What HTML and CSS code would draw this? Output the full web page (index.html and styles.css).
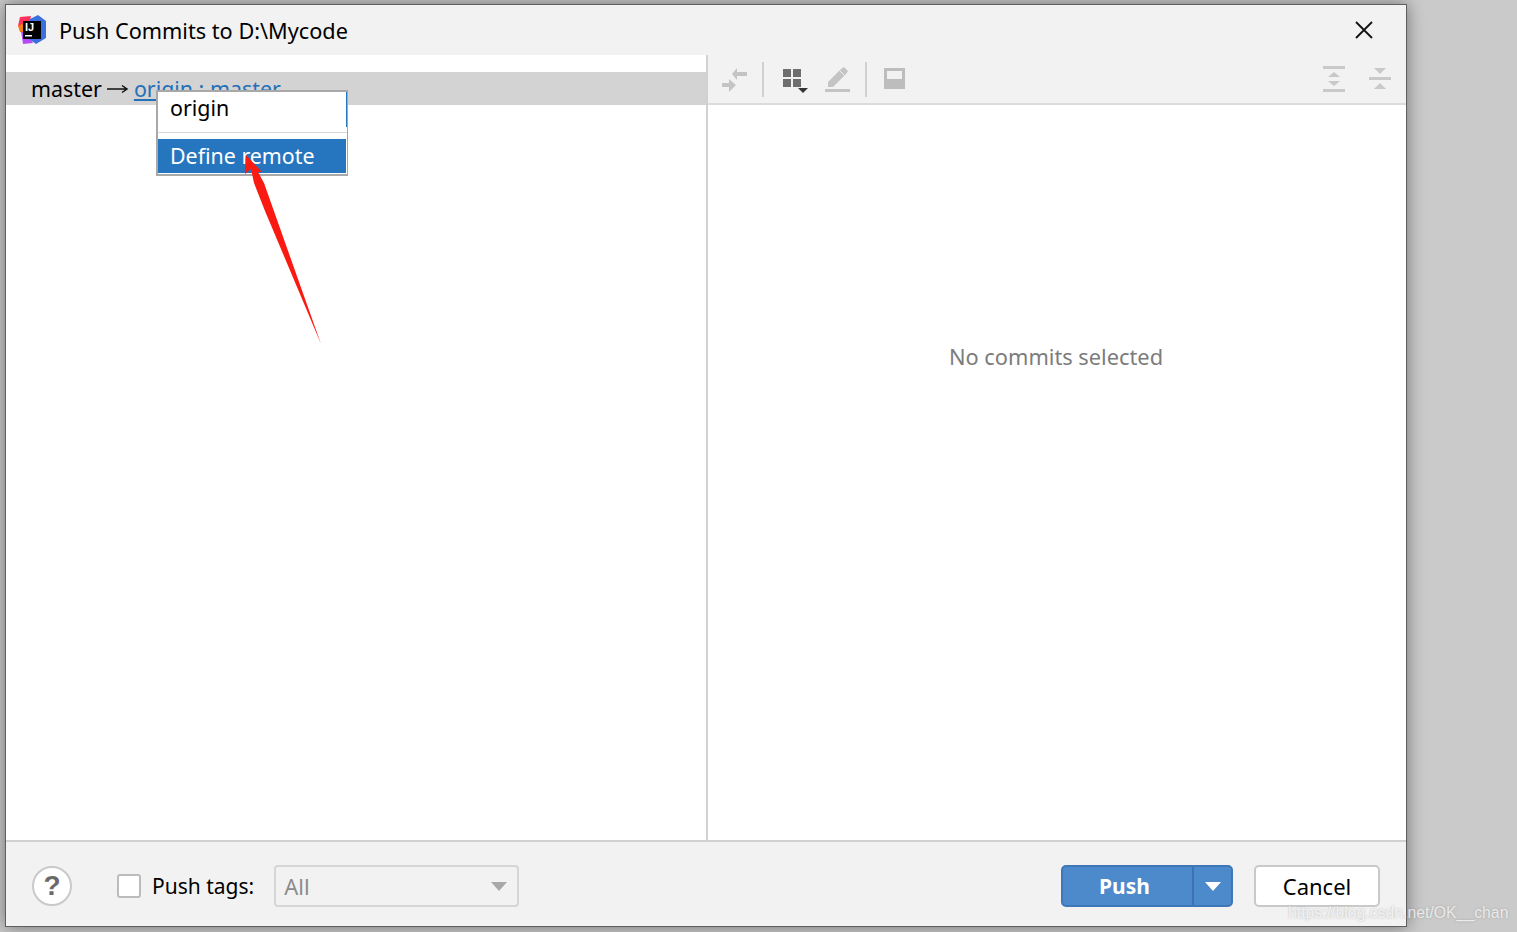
FILE: index.html
```html
<!DOCTYPE html>
<html lang="en">
<head>
    <meta charset="UTF-8">
    <title>Push Commits</title>
    <link rel="stylesheet" href="styles.css">
</head>
<body>

<div class="dialog">
    <div class="title-bar">
        <svg class="app-logo" width="30" height="30" viewBox="0 0 30 30">
            <polygon points="3,2 14,1 12,10 5,14 1,11" fill="#fe315d"/>
            <polygon points="1,11 7,8 7,18 3,17" fill="#f97a12"/>
            <polygon points="4,16 11,20 16,28 6,29" fill="#b74af7"/>
            <polygon points="13,4 21,0 29,6 29,23 19,29 12,24" fill="#3a6fe0"/>
            <rect x="6" y="6" width="18" height="18" fill="#000"/>
            <text class="logo-text" x="8" y="15.5">IJ</text>
            <rect x="8" y="20" width="7" height="1.5" fill="#fff"/>
        </svg>
        <span class="title-text">Push Commits to D:\Mycode</span>
        <svg class="close-icon" width="18" height="18" viewBox="0 0 18 18">
            <path d="M1 1 L17 17 M17 1 L1 17" stroke="#111" stroke-width="1.8" fill="none"/>
        </svg>
    </div>

    <div class="main">
        <div class="left-pane">
            <div class="branch-row">
                <span>master</span>
                <span class="arrow-glyph">
                    <svg width="22" height="10" viewBox="0 0 22 10"><path d="M0 5 H20 M15 1.5 L20 5 L15 8.5" stroke="#111" stroke-width="1.5" fill="none"/></svg>
                </span>
                <a class="remote-link">origin : master</a>
            </div>
        </div>
        <div class="right-pane">
            <div class="toolbar">
                <svg class="tb-icon" width="28" height="28" viewBox="0 0 28 28">
                    <path d="M11 9 L16 3 V7 H26 V11 H16 V15 Z" fill="#c4c4c4"/>
                    <path d="M1 18 H8 V14 L15 20 L8 27 V22 H1 Z" fill="#c4c4c4"/>
                </svg>
                <div class="tb-sep"></div>
                <svg class="tb-icon group-icon" width="28" height="28" viewBox="0 0 28 28">
                    <rect x="1" y="1" width="8" height="8" fill="#6e6e6e"/>
                    <rect x="11" y="1" width="8" height="8" fill="#6e6e6e"/>
                    <rect x="1" y="11" width="8" height="8" fill="#6e6e6e"/>
                    <rect x="11" y="11" width="8" height="8" fill="#6e6e6e"/>
                    <polygon points="16,20 26,20 21,25" fill="#333"/>
                </svg>
                <svg class="tb-icon pencil-icon" width="28" height="28" viewBox="0 0 28 28">
                    <path d="M4 17 L17 4 L20 2 L24 6 L22 9 L9 22 L4 22 Z" fill="#c4c4c4"/>
                    <path d="M15.5 5.5 L20.5 10.5" stroke="#f2f2f2" stroke-width="1"/>
                    <rect x="1" y="24" width="25" height="3" fill="#c4c4c4"/>
                </svg>
                <div class="tb-sep sep-b"></div>
                <svg class="tb-icon" width="24" height="24" viewBox="0 0 24 24">
                    <rect x="1" y="1" width="21" height="21" fill="#bdbdbd"/>
                    <rect x="4" y="4" width="15" height="8" fill="#f2f2f2"/>
                </svg>
                <div class="tb-spacer"></div>
                <svg class="tb-icon expand-icon" width="24" height="26" viewBox="0 0 24 26">
                    <rect x="1" y="0" width="22" height="3" fill="#c9c9c9"/>
                    <polygon points="12,6 18,11 6,11" fill="#c9c9c9"/>
                    <polygon points="6,15 18,15 12,20" fill="#c9c9c9"/>
                    <rect x="1" y="23" width="22" height="3" fill="#c9c9c9"/>
                </svg>
                <svg class="tb-icon collapse-icon" width="24" height="24" viewBox="0 0 24 24">
                    <polygon points="6,1 18,1 12,7" fill="#c9c9c9"/>
                    <rect x="1" y="10" width="22" height="3" fill="#c9c9c9"/>
                    <polygon points="12,16 18,22 6,22" fill="#c9c9c9"/>
                </svg>
            </div>
            <div class="details">No commits selected</div>
        </div>
    </div>

    <div class="footer">
        <div class="help-btn">?</div>
        <label class="push-tags">
            <span class="check-box"></span>
            <span>Push tags:</span>
        </label>
        <div class="tag-select">
            <span>All</span>
            <span class="caret caret-grey"></span>
        </div>
        <div class="footer-spacer"></div>
        <div class="push-btn">
            <span class="push-label">Push</span>
            <span class="push-drop"><span class="caret caret-white"></span></span>
        </div>
        <div class="cancel-btn">Cancel</div>
    </div>

    <!-- Popup ueber der Branch-Zeile -->
    <div class="popup">
        <div class="popup-item first">origin</div>
        <div class="popup-line"></div>
        <div class="popup-item selected">Define remote</div>
    </div>
</div>

<!-- roter Pfeil aus dem Screenshot -->
<svg class="red-arrow" width="90" height="200" viewBox="0 0 90 200">
    <polygon points="1,0 17,17 13,17 19,28 76,189 20,56 9,28 6,14 0,19" fill="#fb1a12"/>
</svg>

<div class="watermark">https://blog.csdn.net/OK__chan</div>

</body>
</html>
```

FILE: styles.css
```css
body {
    margin: 0;
    height: 932px;
    overflow: hidden;
    background-color: #cacaca;
    font-family: "Noto Sans", "Open Sans", sans-serif;
    color: #000;
}
.dialog {
    position: relative;
    box-sizing: border-box;
    width: 1402px;
    height: 923px;
    margin: 4px 0 0 5px;
    border: 1px solid #5f5f5f;
    background-color: #f2f2f2;
    display: flex;
    flex-direction: column;
    box-shadow: 0 0 16px rgba(0, 0, 0, 0.45);
}
.title-bar {
    height: 50px;
    flex: none;
    display: flex;
    align-items: center;
    padding: 0 33px 0 11px;
}
.app-logo {
    margin: 0 12px 0 0;
}
.logo-text {
    font-family: "Liberation Sans", sans-serif;
    font-size: 11px;
    font-weight: bold;
    fill: #fff;
}
.title-text {
    font-size: 21.7px;
    flex: 1;
}
.main {
    flex: 1;
    display: flex;
    min-height: 0;
    background-color: #fff;
    border-bottom: 2px solid #d1d1d1;
}
.left-pane {
    width: 700px;
    flex: none;
    padding-top: 17px;
    border-right: 2px solid #d1d1d1;
}
.branch-row {
    box-sizing: border-box;
    height: 33px;
    background-color: #d3d3d3;
    display: flex;
    align-items: center;
    padding: 0 0 0 25px;
    font-size: 21.4px;
}
.arrow-glyph {
    display: flex;
    margin: 0 5px;
}
.remote-link {
    color: #2470b8;
    text-decoration: underline;
}
.right-pane {
    flex: 1;
    display: flex;
    flex-direction: column;
}
.toolbar {
    height: 50px;
    flex: none;
    box-sizing: border-box;
    background-color: #f2f2f2;
    border-bottom: 2px solid #dcdcdc;
    display: flex;
    align-items: center;
    padding: 0 14px 0 13px;
}
.tb-icon {
    flex: none;
}
.tb-sep {
    width: 2px;
    height: 35px;
    background-color: #d0d0d0;
    margin: 0 18px 0 13px;
}
.pencil-icon {
    margin-left: 14px;
}
.sep-b {
    margin: 0 16px 0 13px;
}
.group-icon {
    margin-top: 6px;
}
.tb-spacer {
    flex: 1;
}
.collapse-icon {
    margin-left: 22px;
}
.details {
    flex: 1;
    display: flex;
    justify-content: center;
    padding: 237px 2px 0 0;
    font-size: 21.8px;
    color: #7c7c7c;
}
.footer {
    box-sizing: border-box;
    height: 84px;
    flex: none;
    display: flex;
    align-items: center;
    padding: 4px 26px 0;
    font-size: 21px;
}
.help-btn {
    box-sizing: border-box;
    width: 40px;
    height: 40px;
    border: 2px solid #c9c9c9;
    border-radius: 50%;
    background-color: #fff;
    color: #6a6a6a;
    font-family: "Liberation Sans", sans-serif;
    font-size: 28px;
    font-weight: bold;
    display: flex;
    align-items: center;
    justify-content: center;
    margin-right: 45px;
}
.push-tags {
    display: flex;
    align-items: center;
}
.check-box {
    box-sizing: border-box;
    width: 24px;
    height: 24px;
    border: 2px solid #bcbcbc;
    border-radius: 3px;
    background-color: #fff;
    margin-right: 11px;
}
.tag-select {
    box-sizing: border-box;
    width: 245px;
    height: 42px;
    margin-left: 20px;
    border: 2px solid #d6d6d6;
    border-radius: 4px;
    display: flex;
    align-items: center;
    justify-content: space-between;
    padding: 0 10px 0 8px;
    color: #8c8c8c;
    font-size: 22px;
}
.caret {
    width: 0;
    height: 0;
    border-left: 8px solid transparent;
    border-right: 8px solid transparent;
}
.caret-grey {
    border-top: 9px solid #a8a8a8;
}
.caret-white {
    border-top: 9px solid #fff;
}
.footer-spacer {
    flex: 1;
}
.push-btn {
    box-sizing: border-box;
    width: 172px;
    height: 42px;
    background-color: #4d8acb;
    border: 2px solid #3f78b8;
    border-radius: 5px;
    display: flex;
    color: #fff;
    font-weight: bold;
    font-size: 21px;
}
.push-label {
    flex: 1;
    display: flex;
    align-items: center;
    justify-content: center;
    padding-right: 6px;
}
.push-drop {
    width: 37px;
    border-left: 2px solid #3c73b0;
    display: flex;
    align-items: center;
    justify-content: center;
}
.cancel-btn {
    box-sizing: border-box;
    width: 126px;
    height: 42px;
    margin-left: 21px;
    background-color: #fff;
    border: 2px solid #c9c9c9;
    border-radius: 5px;
    display: flex;
    align-items: center;
    justify-content: center;
    font-size: 22px;
}
.popup {
    position: absolute;
    left: 150px;
    top: 85px;
    box-sizing: border-box;
    width: 192px;
    height: 86px;
    background-color: #fff;
    border: 1px solid #a8a8a8;
    border-width: 2px 1px 2px 2px;
    font-size: 21.4px;
    display: flex;
    flex-direction: column;
}
.popup-item {
    box-sizing: border-box;
    height: 34px;
    display: flex;
    align-items: center;
    padding: 0 0 2px 12px;
    flex: none;
}
.popup-item.first {
    height: 35px;
    padding-bottom: 5px;
    border-right: 1px solid #2675bf;
}
.popup-line {
    height: 1px;
    background-color: #d8d8d8;
    margin: 5px 0 6px;
}
.popup-item.selected {
    background-color: #2675bf;
    color: #fff;
    margin-right: 1px;
}
.red-arrow {
    position: absolute;
    left: 245px;
    top: 155px;
}
.watermark {
    position: absolute;
    left: 1288px;
    top: 904px;
    font-family: "Liberation Sans", sans-serif;
    font-size: 15.8px;
    color: rgba(255, 255, 255, 0.75);
    text-shadow: 0 0 2px rgba(120, 120, 120, 0.5);
}
```
